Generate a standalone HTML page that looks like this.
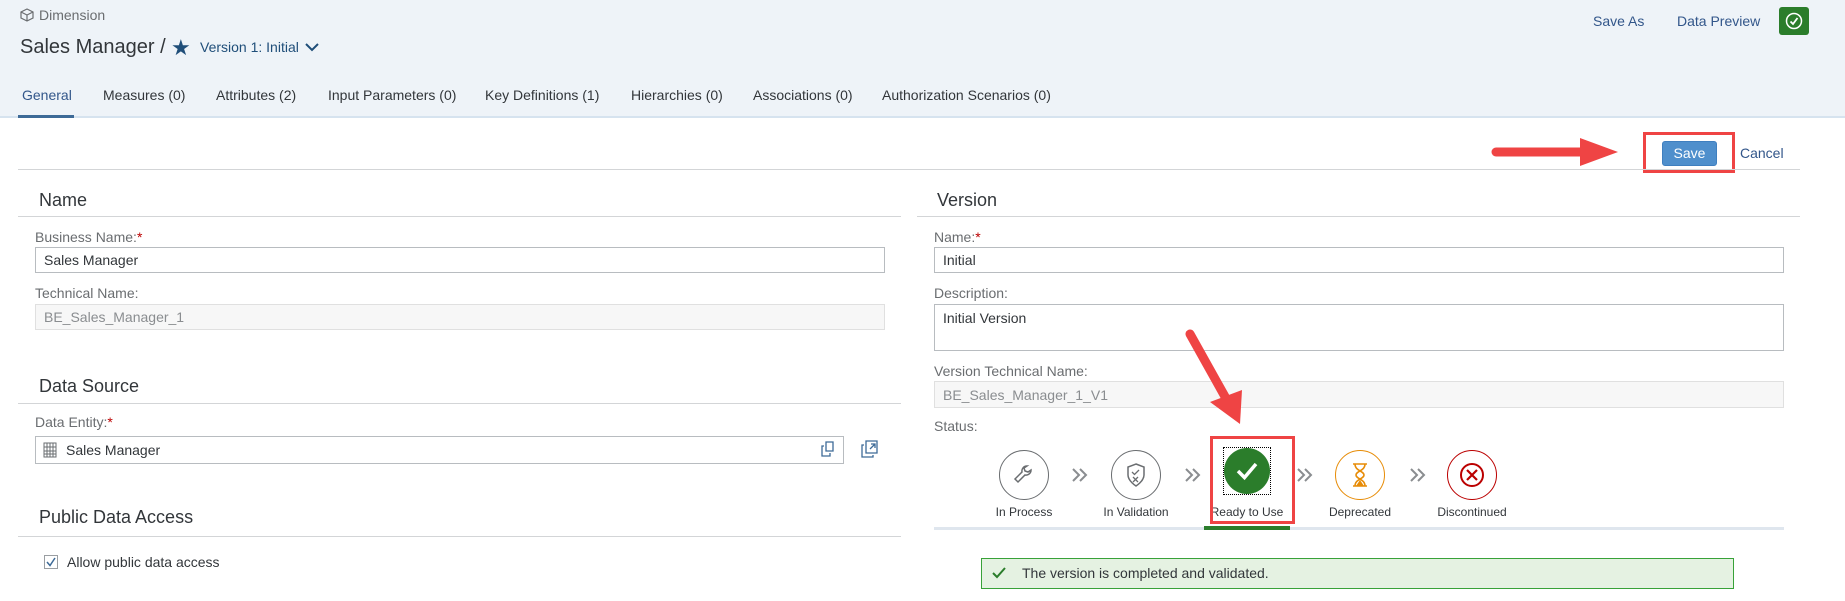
<!DOCTYPE html>
<html><head><meta charset="utf-8">
<style>
*{box-sizing:border-box;margin:0;padding:0}
body{width:1845px;height:601px;overflow:hidden;background:#fff;font-family:"Liberation Sans",Arial,sans-serif;color:#32363a;position:relative}
.a{position:absolute;white-space:nowrap}
.hdr{position:absolute;left:0;top:0;width:1845px;height:118px;background:#eef3f8;border-bottom:2px solid #d6e3ef}
.tab{position:absolute;top:87px;font-size:14px;color:#32363a}
.lbl{position:absolute;font-size:14px;color:#6a6d70}
.req{color:#bb0000}
.inp{position:absolute;border:1px solid #b8bcc0;background:#fff;font-size:14px;padding:6px 8px;color:#32363a}
.ro{background:#f7f7f7;border-color:#e0e0e0;color:#8a8d90}
.h{position:absolute;font-size:18px;color:#32363a}
.ln{position:absolute;height:1px;background:#d3d5d7}
.st{position:absolute;width:50px;height:50px;border-radius:50%;top:450px}
.sl{position:absolute;top:505px;font-size:12px;color:#32363a;text-align:center;width:110px}
.chev{position:absolute;top:467px}
</style></head><body>
<div class="hdr"></div>
<svg class="a" style="left:20px;top:8px" width="14" height="14" viewBox="0 0 14 14"><path d="M7 1L13 4V10L7 13L1 10V4Z M1 4L7 7L13 4 M7 7V13" fill="none" stroke="#6a6d70" stroke-width="1.2"/></svg>
<div class="a" style="left:39px;top:7px;font-size:14px;color:#6a6d70">Dimension</div>
<div class="a" style="left:20px;top:36px;font-size:20px;color:#32363a">Sales Manager /</div>
<div class="a" style="left:171px;top:35px;font-size:22px;color:#1f4e79">★</div>
<div class="a" style="left:200px;top:39px;font-size:14px;color:#1f4e79">Version 1: Initial</div>
<svg class="a" style="left:304px;top:41px" width="16" height="12" viewBox="0 0 16 12"><path d="M2 3L8 9L14 3" fill="none" stroke="#1f4e79" stroke-width="2"/></svg>
<div class="tab" style="left:22px;color:#32568a">General</div>
<div class="a" style="left:18px;top:115px;width:56px;height:3px;background:#3d6a97"></div>
<div class="tab" style="left:103px">Measures (0)</div>
<div class="tab" style="left:216px">Attributes (2)</div>
<div class="tab" style="left:328px">Input Parameters (0)</div>
<div class="tab" style="left:485px">Key Definitions (1)</div>
<div class="tab" style="left:631px">Hierarchies (0)</div>
<div class="tab" style="left:753px">Associations (0)</div>
<div class="tab" style="left:882px">Authorization Scenarios (0)</div>
<div class="a" style="left:1593px;top:13px;font-size:14px;color:#32568a">Save As</div>
<div class="a" style="left:1677px;top:13px;font-size:14px;color:#32568a">Data Preview</div>
<div class="a" style="left:1779px;top:7px;width:30px;height:28px;background:#2b7d2b;border-radius:3px"></div>
<svg class="a" style="left:1785px;top:12px" width="18" height="18" viewBox="0 0 18 18"><circle cx="9" cy="9" r="7.5" fill="none" stroke="#fff" stroke-width="1.5"/><path d="M5.5 9.5L8 12L12.5 6" fill="none" stroke="#fff" stroke-width="1.8"/></svg>

<svg class="a" style="left:1490px;top:135px" width="140" height="34" viewBox="0 0 140 34"><path d="M6 17H92" stroke="#ef4444" stroke-width="9" stroke-linecap="round"/><path d="M90 3L128 17L90 31Z" fill="#ef4444"/></svg>
<div class="a" style="left:1643px;top:132px;width:92px;height:41px;border:3px solid #ef4444"></div>
<div class="a" style="left:1662px;top:141px;width:55px;height:25px;background:#4f8fcc;border:1px solid #3f7fbf;border-radius:3px;color:#fff;font-size:14px;text-align:center;line-height:23px">Save</div>
<div class="a" style="left:1740px;top:145px;font-size:14px;color:#32568a">Cancel</div>
<div class="ln" style="left:18px;top:169px;width:1782px"></div>

<div class="h" style="left:39px;top:190px">Name</div>
<div class="ln" style="left:18px;top:216px;width:883px"></div>
<div class="lbl" style="left:35px;top:229px">Business Name:<span class="req">*</span></div>
<div class="inp" style="left:35px;top:247px;width:850px;height:26px;padding-top:4px">Sales Manager</div>
<div class="lbl" style="left:35px;top:285px">Technical Name:</div>
<div class="inp ro" style="left:35px;top:304px;width:850px;height:26px;padding-top:4px">BE_Sales_Manager_1</div>
<div class="h" style="left:39px;top:376px">Data Source</div>
<div class="ln" style="left:18px;top:403px;width:883px"></div>
<div class="lbl" style="left:35px;top:414px">Data Entity:<span class="req">*</span></div>
<div class="inp" style="left:35px;top:436px;width:809px;height:28px;padding:5px 0 0 30px">Sales Manager</div>
<svg class="a" style="left:43px;top:442px" width="14" height="16" viewBox="0 0 14 16"><path d="M1 1H13V15H1Z M1 5H13 M1 9H13 M1 12H13 M4 1V15 M7 1V15 M10 1V15" fill="none" stroke="#6a6d70" stroke-width="1"/></svg>
<svg class="a" style="left:821px;top:441px" width="14" height="16" viewBox="0 0 14 16"><path d="M5 1H12V10H5Z M3 5H1V15H9V12" fill="none" stroke="#3d6a97" stroke-width="1.3"/></svg>
<svg class="a" style="left:861px;top:440px" width="18" height="18" viewBox="0 0 18 18"><path d="M5 1H16V13H5Z M3 5H1V17H12V15 M9 9L14 4 M10 4H14V8" fill="none" stroke="#3d6a97" stroke-width="1.3"/></svg>
<div class="h" style="left:39px;top:507px">Public Data Access</div>
<div class="ln" style="left:18px;top:536px;width:883px"></div>
<div class="a" style="left:44px;top:555px;width:14px;height:14px;border:1px solid #9a9ea2;background:#fff"></div>
<svg class="a" style="left:45px;top:556px" width="12" height="12" viewBox="0 0 12 12"><path d="M2 6L5 9.5L10 2" fill="none" stroke="#3d6a97" stroke-width="1.5"/></svg>
<div class="a" style="left:67px;top:554px;font-size:14px;color:#32363a">Allow public data access</div>

<div class="h" style="left:937px;top:190px">Version</div>
<div class="ln" style="left:917px;top:216px;width:883px"></div>
<div class="lbl" style="left:934px;top:229px">Name:<span class="req">*</span></div>
<div class="inp" style="left:934px;top:247px;width:850px;height:26px;padding-top:4px">Initial</div>
<div class="lbl" style="left:934px;top:285px">Description:</div>
<div class="inp" style="left:934px;top:304px;width:850px;height:47px;padding-top:5px">Initial Version</div>
<div class="lbl" style="left:934px;top:363px">Version Technical Name:</div>
<div class="inp ro" style="left:934px;top:381px;width:850px;height:27px;padding-top:5px">BE_Sales_Manager_1_V1</div>
<div class="lbl" style="left:934px;top:418px">Status:</div>

<svg class="a" style="left:1180px;top:328px" width="70" height="100" viewBox="0 0 70 100"><path d="M10 6L48 74" stroke="#ef4444" stroke-width="9" stroke-linecap="round"/><path d="M30 74L62 62L60 96Z" fill="#ef4444"/></svg>

<div class="st" style="left:999px;border:1.5px solid #6a6d70"></div>
<svg class="a" style="left:1012px;top:463px" width="24" height="24" viewBox="0 0 24 24"><path d="M15 3a5 5 0 0 0-5 6L3 16l3 3 7-7a5 5 0 0 0 6-5l-3 2-3-1-1-3z" fill="none" stroke="#6a6d70" stroke-width="1.5"/></svg>
<div class="sl" style="left:969px">In Process</div>
<svg class="chev" style="left:1071px" width="18" height="16" viewBox="0 0 18 16"><path d="M2 2L8 8L2 14 M9 2L15 8L9 14" fill="none" stroke="#8a8d90" stroke-width="2"/></svg>
<div class="st" style="left:1111px;border:1.5px solid #6a6d70"></div>
<svg class="a" style="left:1125px;top:462px" width="22" height="26" viewBox="0 0 22 26"><path d="M11 2L19 5V13C19 19 11 24 11 24C11 24 3 19 3 13V5Z" fill="none" stroke="#6a6d70" stroke-width="1.5"/><path d="M7 10L9.5 12.5L14 8 M8 15L13 20 M13 15L8 20" fill="none" stroke="#6a6d70" stroke-width="1.3"/></svg>
<div class="sl" style="left:1081px">In Validation</div>
<svg class="chev" style="left:1184px" width="18" height="16" viewBox="0 0 18 16"><path d="M2 2L8 8L2 14 M9 2L15 8L9 14" fill="none" stroke="#8a8d90" stroke-width="2"/></svg>
<div class="a" style="left:1223px;top:447px;width:48px;height:48px;border:1px dotted #000"></div>
<div class="st" style="left:1224px;top:448px;width:46px;height:46px;background:#2b7d2b"></div>
<svg class="a" style="left:1234px;top:459px" width="26" height="24" viewBox="0 0 26 24"><path d="M4 12L10.5 18.5L22 5" fill="none" stroke="#fff" stroke-width="3.5"/></svg>
<div class="sl" style="left:1192px">Ready to Use</div>
<svg class="chev" style="left:1296px" width="18" height="16" viewBox="0 0 18 16"><path d="M2 2L8 8L2 14 M9 2L15 8L9 14" fill="none" stroke="#8a8d90" stroke-width="2"/></svg>
<div class="st" style="left:1335px;border:1.5px solid #e78c07"></div>
<svg class="a" style="left:1350px;top:462px" width="20" height="26" viewBox="0 0 20 26"><path d="M3 2H17 M3 24H17 M5 2C5 9 14 9 14 13C14 17 5 17 5 24 M15 2C15 9 6 9 6 13C6 17 15 17 15 24" fill="none" stroke="#e78c07" stroke-width="1.6"/><path d="M6 24L10 18L14 24Z" fill="#e78c07"/></svg>
<div class="sl" style="left:1305px">Deprecated</div>
<svg class="chev" style="left:1409px" width="18" height="16" viewBox="0 0 18 16"><path d="M2 2L8 8L2 14 M9 2L15 8L9 14" fill="none" stroke="#8a8d90" stroke-width="2"/></svg>
<div class="st" style="left:1447px;border:1.5px solid #bb0000"></div>
<svg class="a" style="left:1458px;top:461px" width="28" height="28" viewBox="0 0 28 28"><circle cx="14" cy="14" r="11" fill="none" stroke="#bb0000" stroke-width="2"/><path d="M9 9L19 19 M19 9L9 19" stroke="#bb0000" stroke-width="2.2"/></svg>
<div class="sl" style="left:1417px">Discontinued</div>
<div class="a" style="left:1210px;top:436px;width:85px;height:88px;border:3px solid #ef4444"></div>
<div class="a" style="left:934px;top:527px;width:850px;height:3px;background:#dfe6ee"></div>
<div class="a" style="left:1204px;top:526px;width:86px;height:4px;background:#2b7d2b"></div>

<div class="a" style="left:981px;top:558px;width:753px;height:31px;background:#e5f2e2;border:1px solid #38a238"></div>
<svg class="a" style="left:991px;top:565px" width="16" height="16" viewBox="0 0 16 16"><path d="M2 8L6 12L14 3" fill="none" stroke="#2b7d2b" stroke-width="2"/></svg>
<div class="a" style="left:1022px;top:565px;font-size:14px;color:#32363a">The version is completed and validated.</div>
</body></html>
